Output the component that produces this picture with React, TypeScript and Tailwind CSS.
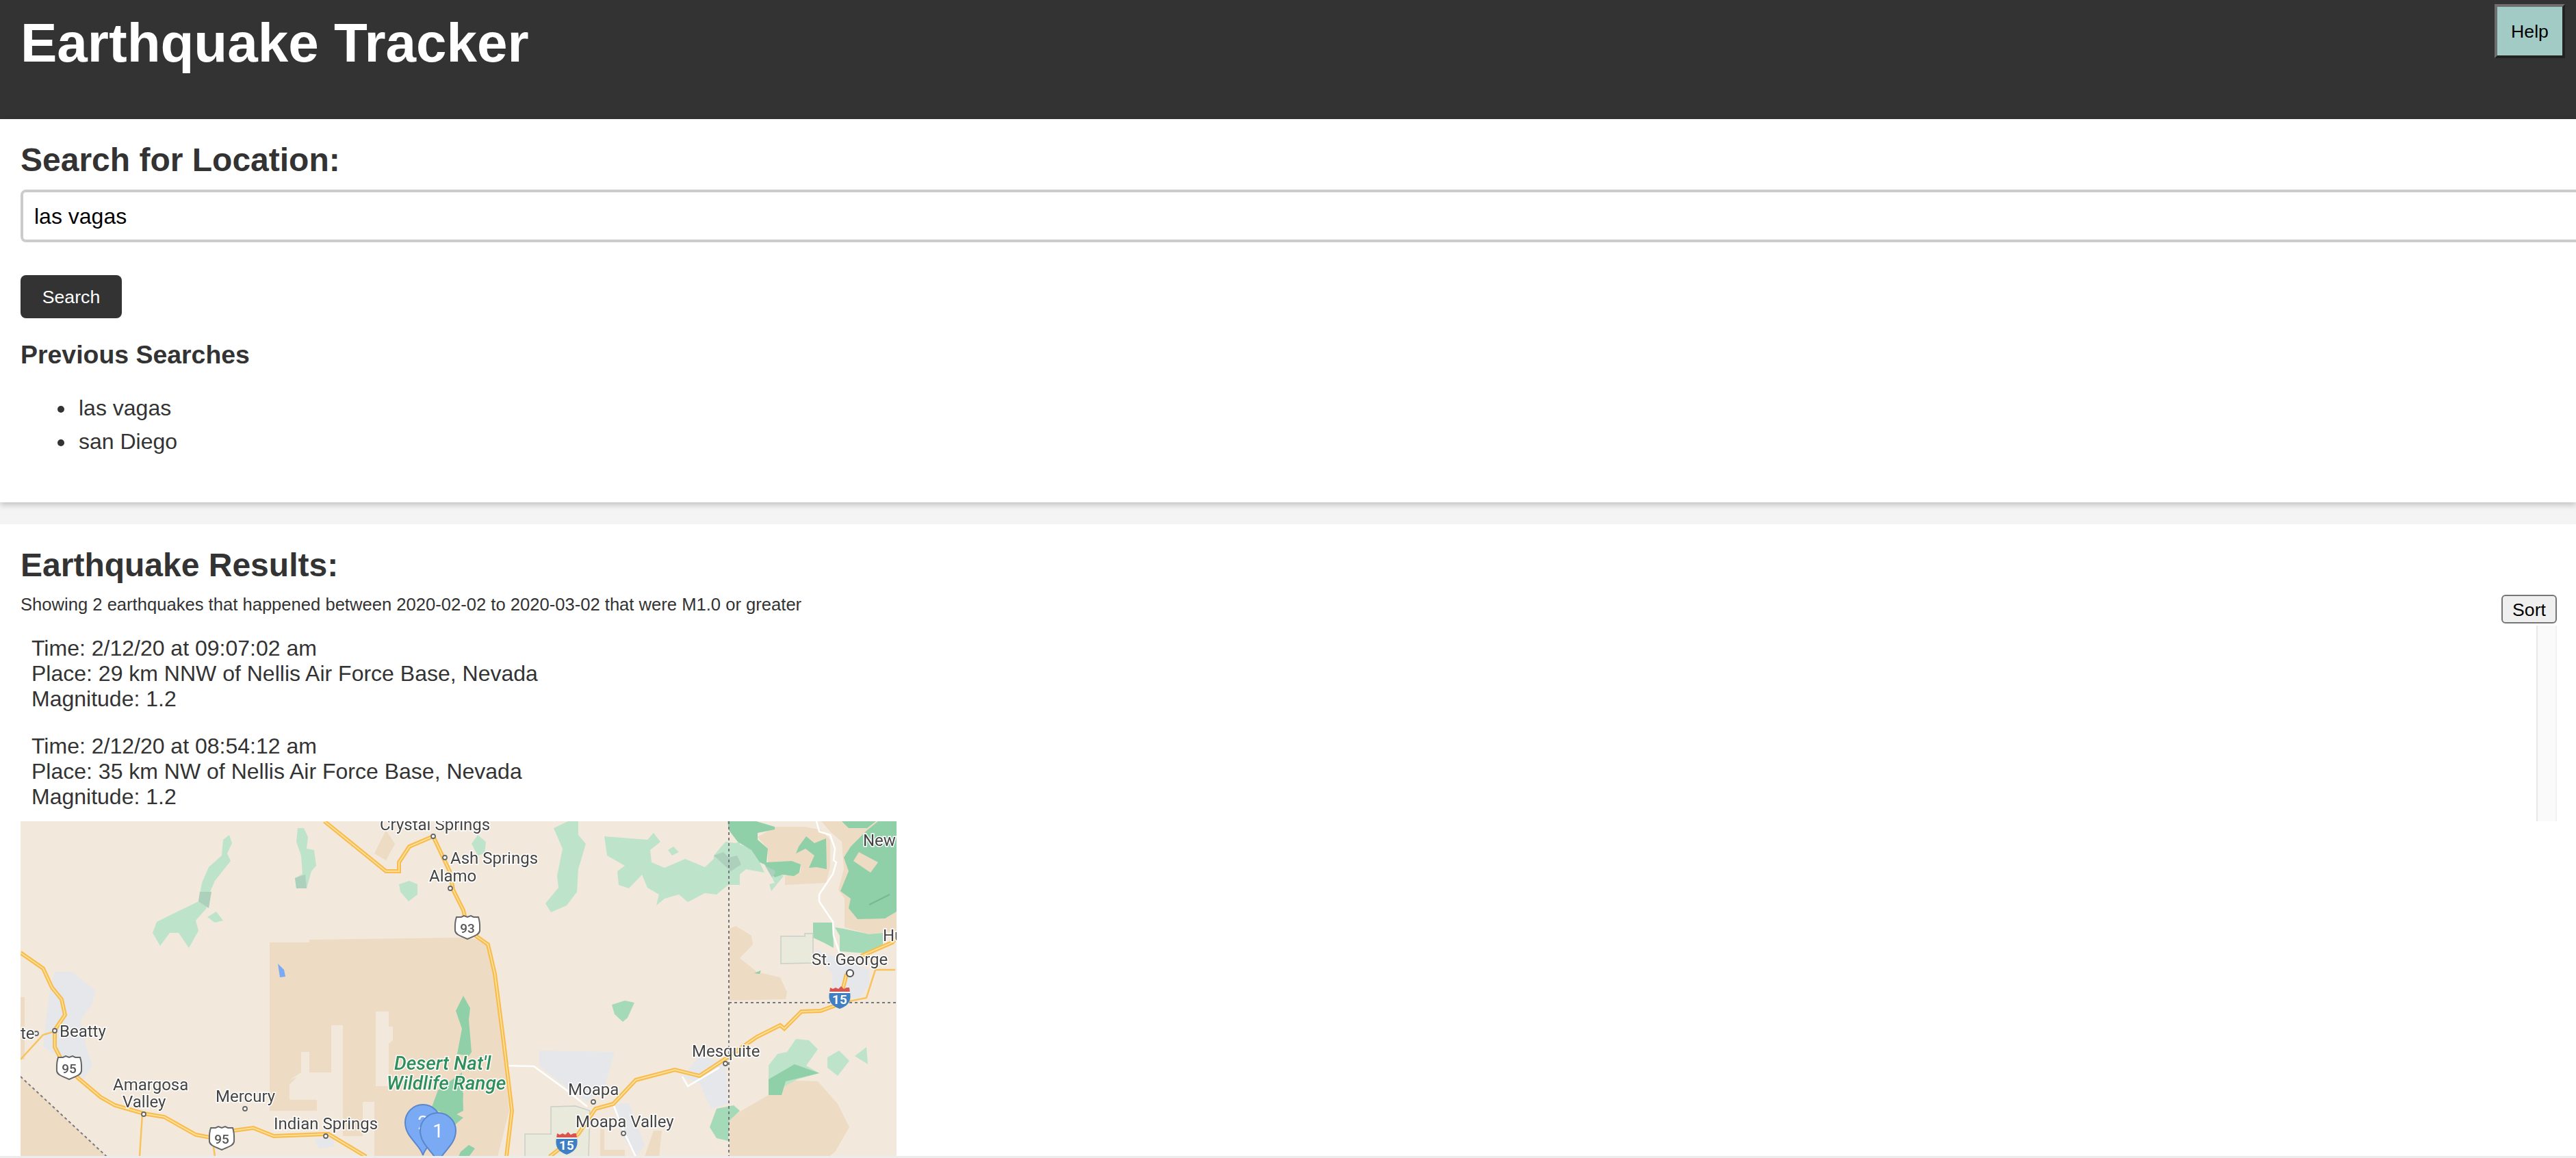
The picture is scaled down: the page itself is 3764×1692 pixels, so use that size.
const TAN = "#eddbc3";
const LAND = "#f2e9dc";
const LIGHT = "#bde3ca";
const MID = "#8fd0a8";
const SOFT = "#a5dab9";
const GRAYGREEN = "#add0bd";
const URBAN = "#e6e7ea";
const PARK = "#e9eadb";

const areas: [string, string][] = [
  // tan land
  ["0,373 126,490 0,490", TAN],
  ["0,257 6,257 6,348 0,348", TAN],
  ["534,13 547,33 534,57 517,47", TAN],
  ["364,177 422,177 422,173 640,170 666,172 685,183 697,257 714,423 697,490 364,490", TAN],
  ["1042,0 1073,0 1077,7 1067,15 1050,20 1042,10", TAN],
  ["1077,23 1103,8 1147,8 1170,13 1183,27 1183,67 1177,90 1117,93 1117,80 1140,75 1140,63 1127,58 1092,62 1092,40", TAN],
  ["1170,0 1280,0 1280,160 1240,165 1204,155 1204,113 1195,100 1203,70 1200,30 1183,15", TAN],
  ["1045,153 1068,167 1070,180 1051,200 1076,220 1110,228 1120,250 1118,260 1036,262 1036,157", TAN],
  ["1036,433 1093,400 1114,378 1165,380 1194,413 1211,447 1190,483 1181,490 1036,490", TAN],
  ["847,450 853,450 853,490 847,490", TAN],
  ["925,452 937,452 933,490 912,490", TAN],
  ["849,480 883,480 883,490 849,490", TAN],
  // lighter cut-outs in the range
  ["410,337 422,337 422,367 393,378 410,367", LAND],
  ["454,298 471,298 471,427 433,427 433,407 393,407 393,385 410,367 454,367", LAND],
  ["519,278 538,278 538,300 544,300 544,320 538,325 538,387 519,387", LAND],
  ["500,410 517,410 517,490 450,490 450,460 500,460", LAND],
  ["364,423 471,423 471,490 364,490", LAND],
  // urban
  ["50,220 75,220 92,233 109,247 105,267 88,290 96,330 105,357 92,377 71,367 50,340 33,330 37,290 44,243", URBAN],
  ["758,335 868,337 853,390 828,410 790,383 758,357", URBAN],
  ["866,413 889,412 912,473 899,490 878,457", URBAN],
  ["967,373 992,343 1030,353 1034,413 1009,420 992,383", URBAN],
  ["1160,187 1190,197 1240,217 1240,240 1223,260 1186,250 1186,223", URBAN],
  ["430,465 458,462 458,475 436,478", URBAN],
  // light greens
  ["305,20 309,32 302,47 307,58 284,87 277,103 271,128 256,145 260,160 246,185 231,163 218,163 204,182 193,163 199,147 223,135 248,123 260,117 265,90 275,67 294,50 296,27", LIGHT],
  ["273,140 286,132 296,145 284,148", LIGHT],
  ["405,10 414,10 420,23 418,40 429,42 432,65 425,73 418,98 403,98 401,83 412,77 410,50 403,30", LIGHT],
  ["553,92 568,87 580,92 580,107 567,117 555,103", LIGHT],
  ["659,33 668,20 680,30 678,47 668,50", LIGHT],
  ["779,10 800,0 815,0 815,20 826,33 815,70 813,103 798,123 775,133 767,120 786,97 784,80 792,40", LIGHT],
  ["853,22 916,27 925,17 935,30 920,42 922,60 941,68 971,55 1000,67 1034,35 1051,30 1051,93 1034,93 1017,107 1000,105 975,118 962,107 941,113 929,123 933,107 916,97 908,78 889,98 874,93 872,73 883,65 857,50", LIGHT],
  ["946,42 954,37 962,45 952,50", LIGHT],
  ["1013,50 1030,30 1047,32 1067,40 1080,60 1087,75 1060,70 1036,90 1013,70", LIGHT],
  ["1088,65 1103,72 1115,80 1097,102 1094,92 1102,90 1098,82", LIGHT],
  ["1093,357 1106,340 1120,337 1133,318 1152,320 1165,333 1148,357 1167,368 1135,377 1093,400", LIGHT],
  ["1179,345 1196,335 1211,350 1194,372 1179,360", LIGHT],
  ["1219,343 1236,330 1238,355", LIGHT],
  ["1007,447 1017,420 1042,415 1051,423 1036,437 1034,467 1017,463", SOFT],
  ["864,268 883,262 897,265 887,287 880,293 868,282", SOFT],
  // mid greens
  ["1033,0 1075,0 1102,8 1102,12 1077,17 1077,27 1092,40 1090,60 1127,58 1140,63 1138,75 1130,80 1113,78 1102,82 1087,63 1080,60 1068,42 1048,30 1035,13", MID],
  ["1148,22 1160,32 1177,25 1178,70 1163,67 1152,68 1160,50 1147,40 1133,47 1137,37", MID],
  ["1237,13 1253,0 1280,0 1280,132 1263,142 1223,143 1210,127 1213,113 1198,102 1210,73 1203,53 1213,37", MID],
  ["1200,0 1250,0 1237,10 1210,10", MID],
  ["1225,45 1253,60 1242,75 1217,58", TAN],
  ["1158,148 1187,148 1188,185 1173,177 1158,170", "#9ed6b2"],
  ["1190,155 1203,157 1240,165 1260,163 1260,180 1237,193 1197,190 1197,167", SOFT],
  ["1093,377 1131,355 1167,368 1118,380 1112,400 1093,400", MID],
  ["647,255 657,273 655,290 659,337 655,343 638,340 645,303 636,277", MID],
  ["630,397 647,397 645,423 630,433", MID],
  ["610,393 645,367 647,423 637,428 647,433 633,445 620,427 600,420", MID],
  ["643,483 655,473 664,478 655,490 640,490", MID],
  ["1072,222 1082,218 1080,223", MID],
  // grey-green
  ["262,103 279,103 275,127 260,117", GRAYGREEN],
  ["401,83 416,78 418,98 403,98", GRAYGREEN],
  ["1013,50 1027,45 1035,53 1047,50 1053,63 1038,73 1027,63", GRAYGREEN],
  ["1088,65 1102,72 1103,75 1098,82", GRAYGREEN],
  // water
  ["376,208 385,217 387,227 379,228", "#7baaf5"],
];

const majorRoads = [
  "0,192 33,215 46,243 60,260 65,283 50,305 50,330 58,345 84,375 117,403 138,415 180,427 210,432 256,458 277,462 311,452 340,448 370,460 446,457 450,457 505,490",
  "444,0 534,73 553,73 553,60 568,37 603,22",
  "603,22 627,73 632,100 647,130 653,155 666,168 683,180 693,223 706,323 718,423 710,490",
  "773,490 815,457 840,420 866,413 899,378 956,363 992,372 1030,347 1076,315 1110,298 1116,303 1141,278 1169,277 1194,268",
  "1197,257 1202,243 1207,223",
  "1228,197 1274,177 1280,170",
];
const minorRoads = [
  "0,348 33,312 50,307",
  "178,427 174,490",
  "281,467 284,490",
  "1211,263 1236,258 1249,217 1278,217",
];
const whiteRoads = [
  "710,357 750,358 798,393 828,417",
  "967,373 975,387 1021,360",
  "1163,0 1167,15 1183,20 1190,40 1188,57 1192,60 1187,77 1167,107 1167,117 1187,147 1188,167 1197,193",
  "866,413 880,450 899,490",
];
const dots: [number, number][] = [
  [50, 306], [23, 310], [180, 428], [328, 420], [446, 460], [603, 22], [620, 53], [628, 98], [837, 410], [881, 456], [1030, 354],
];
const labels: [string, number, number][] = [
  ["Crystal Springs", 525, 13],
  ["Ash Springs", 628, 62],
  ["Alamo", 597, 88],
  ["Beatty", 57, 315],
  ["te", 0, 318],
  ["Amargosa", 135, 393],
  ["Valley", 149, 418],
  ["Mercury", 285, 410],
  ["Indian Springs", 370, 450],
  ["Moapa", 800, 400],
  ["Moapa Valley", 811, 447],
  ["Mesquite", 981, 344],
  ["St. George", 1156, 210],
  ["New", 1231, 36],
  ["Hu", 1260, 175],
];

function Pin({ cx, cy, label }: { cx: number; cy: number; label: string }) {
  return (
    <g>
      <path
        d={`M${cx},${cy + 48} C${cx - 4},${cy + 32} ${cx - 26},${cy + 22} ${cx - 26},${cy} A26,26 0 1 1 ${cx + 26},${cy} C${cx + 26},${cy + 22} ${cx + 4},${cy + 32} ${cx},${cy + 48} Z`}
        fill="#7baaf5"
        stroke="#5a86cc"
        strokeWidth="2"
      />
      <text x={cx} y={cy + 10} textAnchor="middle" fontFamily="Roboto, sans-serif" fontSize="28" fill="#fff">
        {label}
      </text>
    </g>
  );
}

function UsShield({ x, y, n }: { x: number; y: number; n: string }) {
  return (
    <g transform={`translate(${x} ${y})`}>
      <path
        d="M-16,-15 L-9,-15 L-5,-17 L0,-15 L5,-17 L9,-15 L16,-15 C19,-6 18,0 18,5 C17,11 9,13 0,17 C-9,13 -17,11 -18,5 C-18,0 -19,-6 -16,-15 Z"
        fill="#fff"
        stroke="#666"
        strokeWidth="2"
      />
      <text y="8" textAnchor="middle" fontFamily="Roboto, sans-serif" fontSize="19" fontWeight="500" fill="#555">
        {n}
      </text>
    </g>
  );
}

function Interstate({ x, y, n }: { x: number; y: number; n: string }) {
  return (
    <g transform={`translate(${x} ${y})`}>
      <path d="M-15,-7 L15,-7 C17,4 14,12 0,17 C-14,12 -17,4 -15,-7 Z" fill="#3f7fc4" />
      <path d="M-15,-7 L-14,-14 L-10,-12 L-6,-14 L-2,-12 L2,-16 L6,-12 L10,-14 L14,-14 L15,-7 Z" fill="#d9534f" />
      <path d="M-15,-7 L15,-7" stroke="#fff" strokeWidth="2" />
      <text y="10" textAnchor="middle" fontFamily="Roboto, sans-serif" fontSize="19" fontWeight="700" fill="#fff">
        {n}
      </text>
    </g>
  );
}

function MapDrawing() {
  return (
    <svg viewBox="0 0 1280 489" className="block h-full w-full blur-[0.6px]">
      <rect width="1280" height="489" fill={LAND} />
      {areas.map(([points, fill], i) => (
        <polygon key={i} points={points} fill={fill} />
      ))}
      <polygon points="775,417 811,416 832,423 830,490 737,490 737,457 775,457" fill={PARK} stroke="#c8cfc8" strokeWidth="1.5" />
      <polygon points="1111,168 1146,168 1146,164 1158,164 1158,207 1111,208" fill={PARK} stroke="#c8cfc8" strokeWidth="1.5" />
      <polyline points="1240,122 1270,107" fill="none" stroke="#78b894" strokeWidth="2" />
      <polyline points="1035,0 1035,490" fill="none" stroke="#77777e" strokeWidth="2" strokeDasharray="4 4" />
      <polyline points="1035,265 1280,265" fill="none" stroke="#77777e" strokeWidth="2" strokeDasharray="4 4" />
      <polyline points="0,373 126,490" fill="none" stroke="#77777e" strokeWidth="2" strokeDasharray="4 4" />
      {whiteRoads.map((p, i) => (
        <polyline key={i} points={p} fill="none" stroke="#fff" strokeWidth="2.5" />
      ))}
      {minorRoads.map((p, i) => (
        <polyline key={i} points={p} fill="none" stroke="#f8c25c" strokeWidth="2.5" />
      ))}
      {majorRoads.map((p, i) => (
        <polyline key={i} points={p} fill="none" stroke="#f8bd4e" strokeWidth="6" />
      ))}
      {majorRoads.map((p, i) => (
        <polyline key={i} points={p} fill="none" stroke="#fee5a5" strokeWidth="1.5" />
      ))}
      {dots.map(([x, y], i) => (
        <circle key={i} cx={x} cy={y} r="3" fill="#fff" stroke="#666" strokeWidth="1.8" />
      ))}
      <circle cx="1212" cy="222" r="5" fill="#fff" stroke="#555" strokeWidth="2.2" />
      {labels.map(([t, x, y]) => (
        <text
          key={t}
          x={x}
          y={y}
          fontFamily="Roboto, sans-serif"
          fontSize="24"
          fill="#444"
          stroke="#fff"
          strokeWidth="3"
          paintOrder="stroke"
        >
          {t}
        </text>
      ))}
      <text x="546" y="363" fontFamily="Roboto, sans-serif" fontStyle="italic" fontWeight="500" fontSize="28" fill="#2f8f5b" stroke="#fff" strokeWidth="3" paintOrder="stroke">
        Desert Nat'l
      </text>
      <text x="535" y="392" fontFamily="Roboto, sans-serif" fontStyle="italic" fontWeight="500" fontSize="28" fill="#2f8f5b" stroke="#fff" strokeWidth="3" paintOrder="stroke">
        Wildlife Range
      </text>
      <UsShield x={71} y={360} n="95" />
      <UsShield x={294} y={463} n="95" />
      <UsShield x={653} y={155} n="93" />
      <Interstate x={1197} y={257} n="15" />
      <Interstate x={798} y={470} n="15" />
      <Pin cx={588} cy={440} label="2" />
      <Pin cx={610} cy={452} label="1" />
    </svg>
  );
}

const quakes = [
  { time: "2/12/20 at 09:07:02 am", place: "29 km NNW of Nellis Air Force Base, Nevada", mag: "1.2" },
  { time: "2/12/20 at 08:54:12 am", place: "35 km NW of Nellis Air Force Base, Nevada", mag: "1.2" },
];

export default function App() {
  return (
    <div className="flex h-[1692px] flex-col overflow-hidden bg-white font-['Liberation_Sans',Arial,sans-serif] text-[#333]">
      <div className="min-h-0 flex-1 overflow-hidden">
        <header className="flex h-[174px] items-start justify-between bg-[#333] pl-[30px] pr-[16px] pt-[6px]">
          <h1 className="mt-[11px] text-[80px] font-bold leading-[92px] text-white">Earthquake Tracker</h1>
          <button className="h-[79px] w-[103px] border-4 border-t-[#6f6f6f] border-l-[#6f6f6f] border-r-[#222] border-b-[#222] bg-[#a3cbc6] text-[26.67px] text-black">
            Help
          </button>
        </header>

        <section className="relative z-10 h-[560px] bg-white px-[30px] pt-[32px] shadow-[0_4px_8px_rgba(0,0,0,0.2)]">
          <h2 className="text-[48px] font-bold leading-[55px]">Search for Location:</h2>
          <input
            readOnly
            value="las vagas"
            className="mt-[16px] box-content block h-[37px] w-full rounded-[8px] border-4 border-[#ccc] px-[16px] py-[16px] text-[32px] text-black outline-none"
          />
          <button className="mt-[48px] block h-[63px] w-[148px] rounded-[8px] bg-[#333] text-[26.67px] text-white">Search</button>
          <h3 className="mt-[32px] text-[37.44px] font-bold leading-[43px]">Previous Searches</h3>
          <ul className="mt-[32px] pl-[54px] text-[32px] leading-[49px]">
            <li className="flex items-center gap-[21px]">
              <span className="mt-[3px] h-[10px] w-[10px] rounded-full bg-[#333]" />
              las vagas
            </li>
            <li className="flex items-center gap-[21px]">
              <span className="mt-[3px] h-[10px] w-[10px] rounded-full bg-[#333]" />
              san Diego
            </li>
          </ul>
        </section>

        <div className="h-[32px] bg-[#f4f4f4]" />

        <section className="bg-white pl-[30px] pr-[28px] pt-[32px]">
          <h2 className="text-[48px] font-bold leading-[55px]">Earthquake Results:</h2>
          <div className="mt-[15px] flex h-[46px] items-start justify-between">
            <p className="text-[25.6px] leading-[31px]">Showing 2 earthquakes that happened between 2020-02-02 to 2020-03-02 that were M1.0 or greater</p>
            <button className="mt-[1px] h-[42px] w-[81px] rounded-[6px] border-2 border-[#767676] bg-[#efefef] text-[26.67px] text-black">Sort</button>
          </div>
          <div className="flex h-[286px] justify-between">
            <div className="pl-[16px] pt-[15px] text-[32px] leading-[37px]">
              {quakes.map((q) => (
                <div key={q.time} className="mb-[32px]">
                  <div>Time: {q.time}</div>
                  <div>Place: {q.place}</div>
                  <div>Magnitude: {q.mag}</div>
                </div>
              ))}
            </div>
            <div className="w-[30px] border-l-2 border-r-2 border-l-[#e8e8e8] border-r-[#f1f1f1] bg-[#fafafa]" />
          </div>
          <div className="h-[489px] w-[1280px] overflow-hidden bg-[#f2e9dc]">
            <MapDrawing />
          </div>
        </section>
      </div>
      <div className="h-[3px] bg-[#ececec]" />
    </div>
  );
}
